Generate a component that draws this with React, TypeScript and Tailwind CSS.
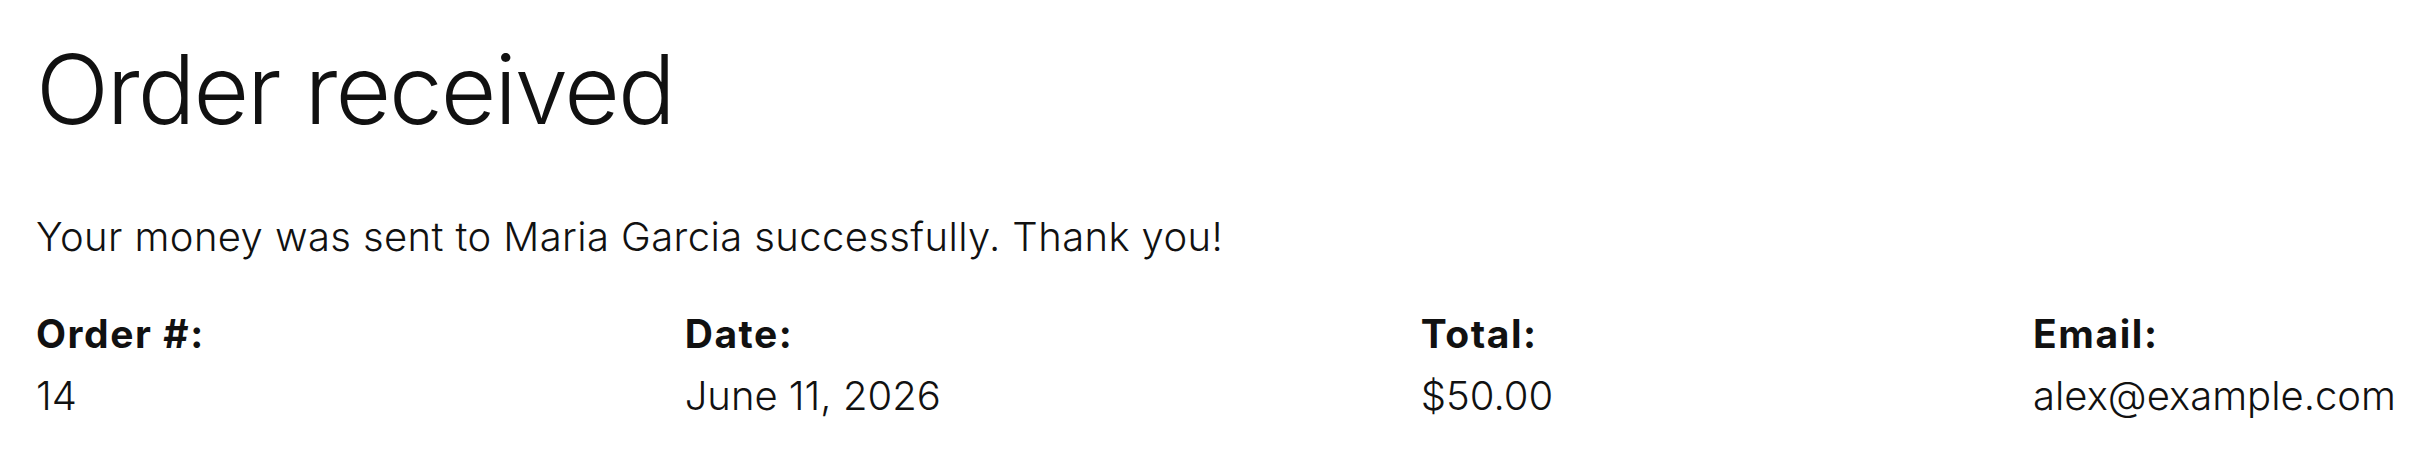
export default function App() {
  const details = [
    { label: "Order #:", value: "14" },
    { label: "Date:", value: "June 11, 2026" },
    { label: "Total:", value: "$50.00" },
    { label: "Email:", value: "alex@example.com" },
  ];

  return (
    <div
      className="min-h-[462px] w-full bg-white px-9 pt-[41px] text-[#111111]"
      style={{ fontFamily: "Inter, 'Noto Sans', sans-serif" }}
    >
      <h1 className="text-[96px] font-light leading-none tracking-[-0.021em]">Order received</h1>

      <p className="mt-[70px] text-[40px] font-light leading-[60px] tracking-[0.01em]">
        Your money was sent to Maria Garcia successfully. Thank you!
      </p>

      <div className="mt-[36px] flex justify-between">
        {details.map((d) => (
          <div key={d.label} className="flex flex-col">
            <span className="text-[39px] font-bold leading-[62px] tracking-[0.04em]">{d.label}</span>
            <span className="text-[40px] font-light leading-[62px]">{d.value}</span>
          </div>
        ))}
      </div>
    </div>
  );
}
